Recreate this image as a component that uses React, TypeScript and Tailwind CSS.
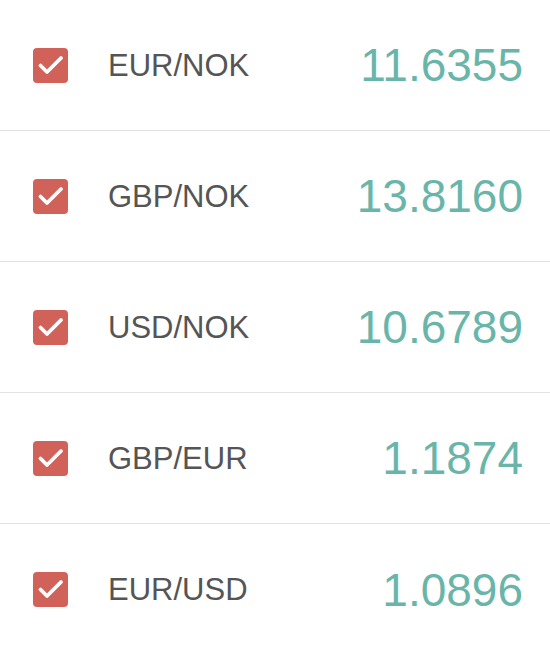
import React from "react";

const rows = [
  { pair: "EUR/NOK", value: "11.6355" },
  { pair: "GBP/NOK", value: "13.8160" },
  { pair: "USD/NOK", value: "10.6789" },
  { pair: "GBP/EUR", value: "1.1874" },
  { pair: "EUR/USD", value: "1.0896" },
];

export default function App() {
  return (
    <div className="w-[550px] h-[650px] bg-white overflow-hidden" style={{ fontFamily: '"Liberation Sans", Arial, sans-serif' }}>
      {rows.map((r, i) => (
        <div
          key={r.pair}
          className={`flex items-center h-[131px] pl-[33px] pr-[27px] ${i < rows.length - 1 ? "border-b border-[#e2e2e2]" : ""}`}
        >
          <div className="w-[35px] h-[35px] rounded-[4px] bg-[#d0625a] shrink-0">
            <svg width="35" height="35" viewBox="0 0 35 35" fill="none">
              <path d="M7.5 17.5 L14 24 L28 10" stroke="white" strokeWidth="3.8" strokeLinecap="round" strokeLinejoin="round" />
            </svg>
          </div>
          <div className="ml-[40px] text-[31px] text-[#555555] leading-none">{r.pair}</div>
          <div className="ml-auto text-[46px] text-[#6ab5aa] leading-none">{r.value}</div>
        </div>
      ))}
    </div>
  );
}
